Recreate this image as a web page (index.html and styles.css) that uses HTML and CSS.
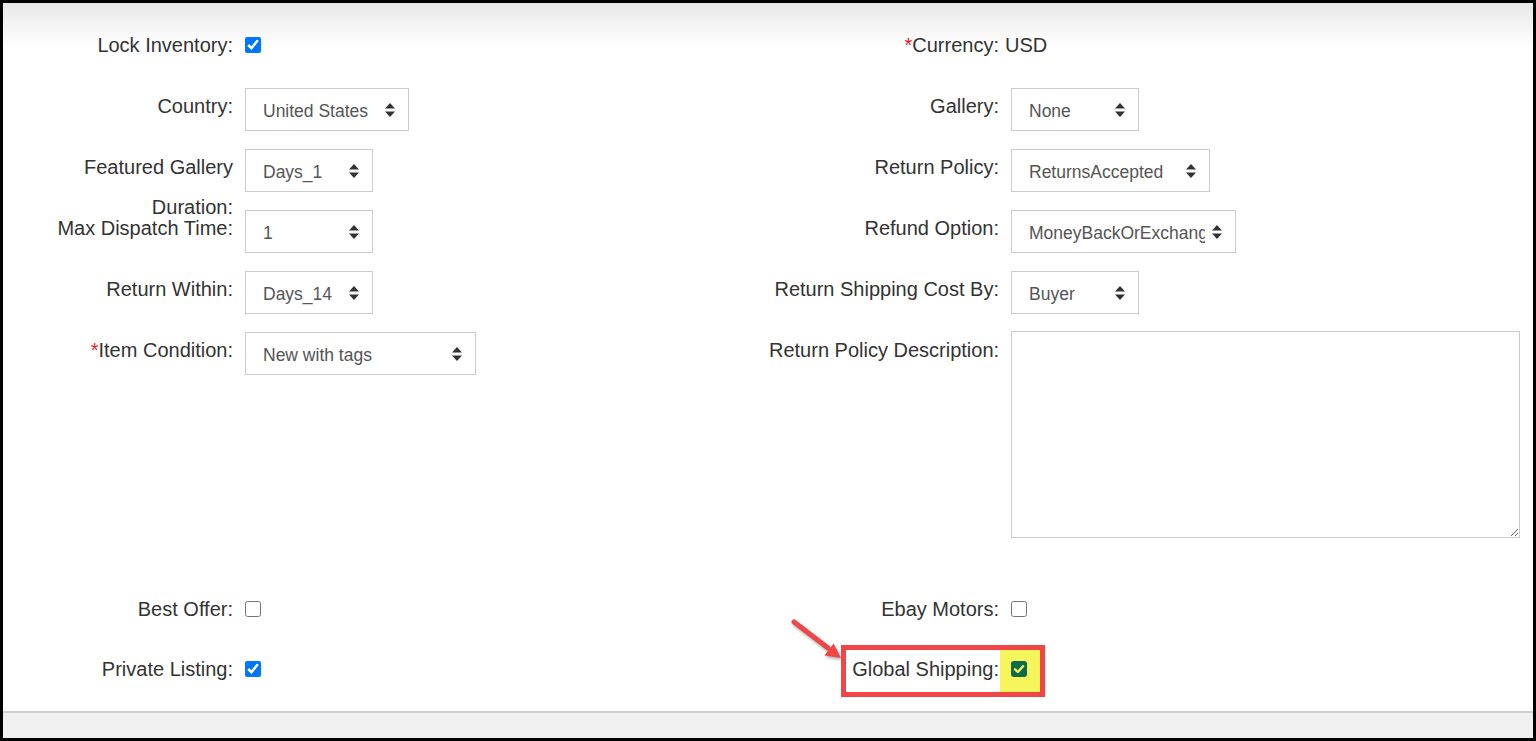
FILE: index.html
```html
<!DOCTYPE html>
<html lang="en">

<head>
  <meta charset="UTF-8">
  <meta name="viewport" content="width=device-width, initial-scale=1.0">
  <title>Listing Settings</title>
  <link rel="stylesheet" href="styles.css">
</head>

<body>
  <div class="frame">
    <form class="listing">

      <div class="field">
        <label class="label">Lock Inventory:</label>
        <div class="control"><input type="checkbox" class="check" checked></div>
      </div>
      <div class="field">
        <label class="label"><span class="req">*</span>Currency:</label>
        <div class="control"><span class="static">USD</span></div>
      </div>

      <div class="field">
        <label class="label">Country:</label>
        <div class="control">
          <div class="select sel-country"><span>United States</span>
            <svg viewBox="0 0 12 16"><path d="M1 6.5 6 1l5 5.5z M1 9.5 6 15l5-5.5z" /></svg>
          </div>
        </div>
      </div>
      <div class="field">
        <label class="label">Gallery:</label>
        <div class="control">
          <div class="select sel-short"><span>None</span>
            <svg viewBox="0 0 12 16"><path d="M1 6.5 6 1l5 5.5z M1 9.5 6 15l5-5.5z" /></svg>
          </div>
        </div>
      </div>

      <div class="field">
        <label class="label">Featured Gallery<br>Duration:</label>
        <div class="control">
          <div class="select sel-short"><span>Days_1</span>
            <svg viewBox="0 0 12 16"><path d="M1 6.5 6 1l5 5.5z M1 9.5 6 15l5-5.5z" /></svg>
          </div>
        </div>
      </div>
      <div class="field">
        <label class="label">Return Policy:</label>
        <div class="control">
          <div class="select sel-policy"><span>ReturnsAccepted</span>
            <svg viewBox="0 0 12 16"><path d="M1 6.5 6 1l5 5.5z M1 9.5 6 15l5-5.5z" /></svg>
          </div>
        </div>
      </div>

      <div class="field">
        <label class="label">Max Dispatch Time:</label>
        <div class="control">
          <div class="select sel-short"><span>1</span>
            <svg viewBox="0 0 12 16"><path d="M1 6.5 6 1l5 5.5z M1 9.5 6 15l5-5.5z" /></svg>
          </div>
        </div>
      </div>
      <div class="field">
        <label class="label">Refund Option:</label>
        <div class="control">
          <div class="select sel-refund"><span>MoneyBackOrExchange</span>
            <svg viewBox="0 0 12 16"><path d="M1 6.5 6 1l5 5.5z M1 9.5 6 15l5-5.5z" /></svg>
          </div>
        </div>
      </div>

      <div class="field">
        <label class="label">Return Within:</label>
        <div class="control">
          <div class="select sel-short"><span>Days_14</span>
            <svg viewBox="0 0 12 16"><path d="M1 6.5 6 1l5 5.5z M1 9.5 6 15l5-5.5z" /></svg>
          </div>
        </div>
      </div>
      <div class="field">
        <label class="label">Return Shipping Cost By:</label>
        <div class="control">
          <div class="select sel-short"><span>Buyer</span>
            <svg viewBox="0 0 12 16"><path d="M1 6.5 6 1l5 5.5z M1 9.5 6 15l5-5.5z" /></svg>
          </div>
        </div>
      </div>

      <div class="field">
        <label class="label"><span class="req">*</span>Item Condition:</label>
        <div class="control">
          <div class="select sel-wide"><span>New with tags</span>
            <svg viewBox="0 0 12 16"><path d="M1 6.5 6 1l5 5.5z M1 9.5 6 15l5-5.5z" /></svg>
          </div>
        </div>
      </div>
      <div class="field">
        <label class="label">Return Policy Description:</label>
        <div class="control"><textarea class="desc"></textarea></div>
      </div>

      <div class="field spaced">
        <label class="label">Best Offer:</label>
        <div class="control"><input type="checkbox" class="check"></div>
      </div>
      <div class="field spaced">
        <label class="label">Ebay Motors:</label>
        <div class="control"><input type="checkbox" class="check"></div>
      </div>

      <div class="field">
        <label class="label">Private Listing:</label>
        <div class="control"><input type="checkbox" class="check" checked></div>
      </div>
      <div class="field">
        <!-- annotation drawn over the screenshot -->
        <svg class="pointer" viewBox="0 0 60 50">
          <path d="M5 7 39 33" />
          <polygon points="52,43 35.5,40.5 44.5,28.5" />
        </svg>
        <div class="callout"></div>
        <div class="marker"></div>
        <label class="label">Global Shipping:</label>
        <div class="control">
          <span class="check-hl">
            <svg viewBox="0 0 16 16"><path d="M4 8.3 6.8 11 12 5.2" /></svg>
          </span>
        </div>
      </div>

    </form>
    <div class="footer"></div>
  </div>
</body>

</html>
```

FILE: styles.css
```css
html,
body {
  margin: 0;
}

body {
  width: 1536px;
  height: 741px;
  background-color: #000;
  font-family: "Liberation Sans", Arial, sans-serif;
  color: #333;
}

.frame {
  margin: 3px;
  width: 1530px;
  height: 735px;
  display: flex;
  flex-direction: column;
  background: linear-gradient(#e9e9e9, #fff 44px);
}

.listing {
  flex: 1;
  display: grid;
  grid-template-columns: 766px 764px;
  row-gap: 18px;
  align-content: start;
  padding-top: 24px;
}

.field {
  position: relative;
  display: flex;
  align-items: flex-start;
  min-height: 43px;
}

.field.spaced {
  margin-top: 35px;
  min-height: 42px;
}

.label {
  flex: none;
  width: 230px;
  height: 40px;
  margin-top: -2px;
  text-align: right;
  font-size: 20px;
  line-height: 40px;
  white-space: nowrap;
}

.req {
  color: #e8202a;
}

.control {
  margin-left: 12px;
}

.static {
  display: block;
  margin: -2px 0 0 -6px;
  font-size: 20px;
  line-height: 40px;
}

.check {
  display: block;
  width: 16px;
  height: 16px;
  margin: 10px 0 0;
}

/* select boxes */
.select {
  display: flex;
  align-items: center;
  height: 43px;
  box-sizing: border-box;
  border: 1px solid #ccc;
  padding: 3px 12px 0 17px;
  background-color: #fff;
  font-size: 17.5px;
  color: #555;
}

.select span {
  flex: 1;
  overflow: hidden;
  white-space: nowrap;
}

.select svg {
  flex: none;
  width: 12px;
  height: 16px;
  margin: -3px 0 0 6px;
  fill: #333;
}

.sel-country {
  width: 164px;
}

.sel-short {
  width: 128px;
}

.sel-wide {
  width: 231px;
}

.sel-policy {
  width: 199px;
}

.sel-refund {
  width: 225px;
}

.desc {
  display: block;
  width: 509px;
  height: 207px;
  box-sizing: border-box;
  margin: -1px 0 0;
  border: 1px solid #ccc;
  resize: both;
  background-color: #fff;
}

/* highlighted checkbox */
.check-hl {
  position: relative;
  z-index: 1;
  display: block;
  width: 16px;
  height: 16px;
  margin-top: 10px;
  border-radius: 3px;
  background-color: #0e6a4d;
}

.check-hl svg {
  display: block;
  width: 16px;
  height: 16px;
  fill: none;
  stroke: #f6f25a;
  stroke-width: 2.4;
  stroke-linecap: round;
  stroke-linejoin: round;
}

.callout {
  position: absolute;
  left: 72px;
  top: -6px;
  width: 204px;
  height: 52px;
  box-sizing: border-box;
  border: 5px solid #f24646;
}

.marker {
  position: absolute;
  left: 231px;
  top: -1px;
  width: 40px;
  height: 42px;
  background-color: #f7f55c;
}

.pointer {
  position: absolute;
  left: 20px;
  top: -36px;
  width: 60px;
  height: 50px;
  overflow: visible;
  filter: drop-shadow(1px 2px 1.5px rgba(0, 0, 0, 0.3));
}

.pointer path {
  stroke: #f04646;
  stroke-width: 5;
  stroke-linecap: round;
  fill: none;
}

.pointer polygon {
  fill: #f04646;
}

.footer {
  height: 25px;
  border-top: 2px solid #cfcfcf;
  background-color: #f0f0f0;
}
```
